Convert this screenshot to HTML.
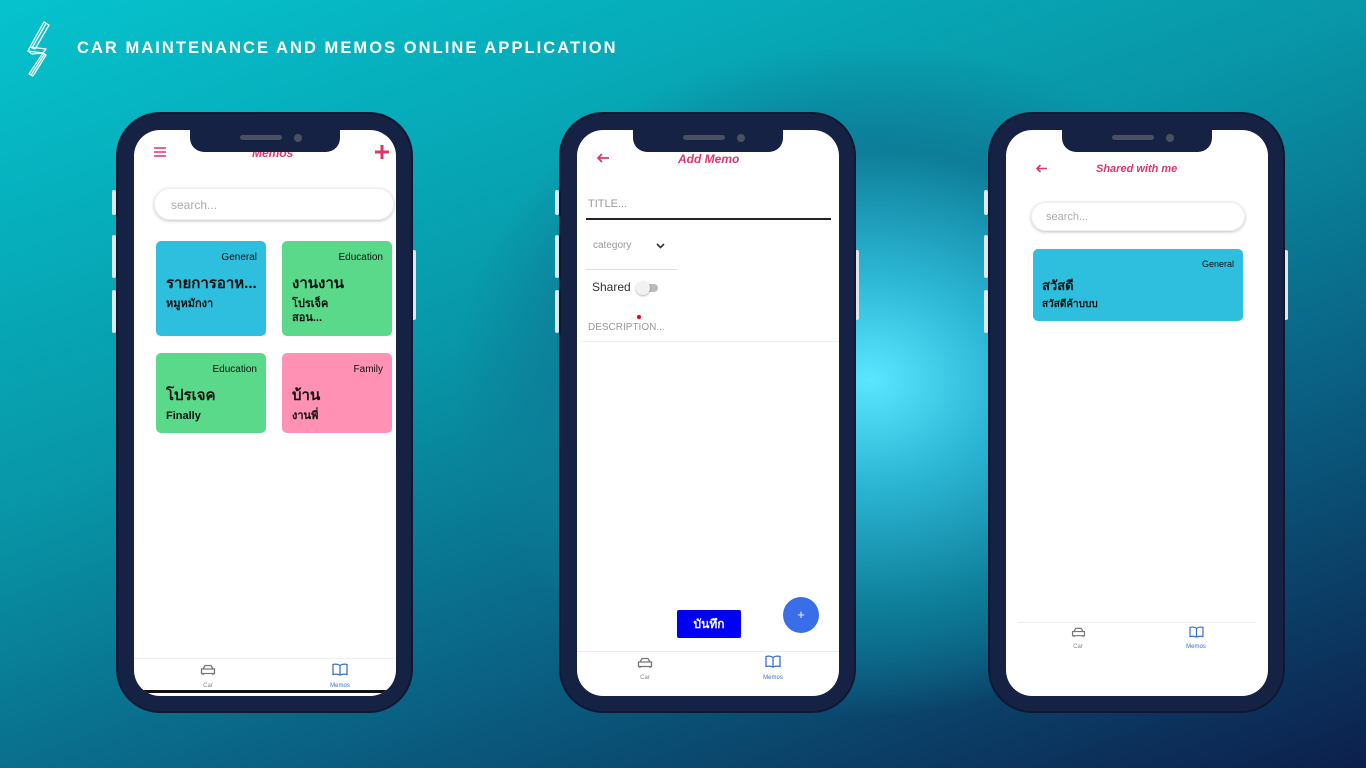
<!DOCTYPE html>
<html><head><meta charset="utf-8"><style>
*{margin:0;padding:0;box-sizing:border-box}
body{width:1366px;height:768px;overflow:hidden;position:relative;font-family:"Liberation Sans","Noto Sans CJK SC",sans-serif;
background:radial-gradient(ellipse 520px 420px at 870px 380px,#5ae6ff 0%,#2bb6d4 25%,#0d7d98 55%,rgba(13,100,130,0) 80%),linear-gradient(160deg,#05c3cd 0%,#0897a8 40%,#0a5d80 70%,#0c1f4c 100%);}
.title{position:absolute;left:77px;top:39px;color:#fff;font-weight:bold;font-size:16.5px;letter-spacing:2.05px}
.phone{position:absolute;top:112px;width:297px;height:601px;background:#162244;border-radius:44px;border:2px solid #0e1833}
.scr{position:absolute;left:16px;top:16px;width:262px;height:566px;background:#fff;border-radius:26px;overflow:hidden}
.notch{position:absolute;left:72px;top:16px;width:150px;height:22px;background:#162244;border-radius:0 0 14px 14px}
.notch:before{content:"";position:absolute;left:50px;top:5px;width:42px;height:5px;border-radius:3px;background:#4b5060}
.notch:after{content:"";position:absolute;left:104px;top:4px;width:8px;height:8px;border-radius:50%;background:#4b5060}
.btn{position:absolute;width:4px;background:#dfe6ea;border-radius:2px}
.pink{color:#e0356a;font-style:italic;font-weight:bold}
.search{position:absolute;border-radius:18px;box-shadow:0 1px 3px rgba(0,0,0,.25);border:1px solid #eee;color:#aaa;font-size:12px}
.card{position:absolute;border-radius:5px;color:#111}
.card .c{position:absolute;right:9px;top:11px;font-size:10px}
.card .t{position:absolute;left:10px;top:30px;font-size:15px;font-weight:bold}
.card .d{position:absolute;left:10px;top:56px;font-size:11px;font-weight:bold;line-height:14px}
.nav{position:absolute;left:0;width:262px;border-top:1px solid #eee;font-size:6px}
.nav span{position:absolute;text-align:center;width:60px}
.nav svg{position:absolute}
</style></head><body>
<svg style="position:absolute;left:26px;top:20px" width="34" height="58" viewBox="0 0 34 58" fill="none" stroke="#fff" stroke-width="1.3" stroke-linejoin="round"><path d="M18 2 L23 5 L9 29 L4 27 Z"/><path d="M20 3.5 L6 28"/><path d="M4 27 L2 31 L17 33 L20 29 Z"/><path d="M2 31 L6 34 L17 33"/><path d="M17 33 L20 35 L7 56 L3 54 Z"/><path d="M18.5 34 L5 55"/></svg>
<div class="title">CAR MAINTENANCE AND MEMOS ONLINE APPLICATION</div>

<!-- phone 1 -->
<div class="btn" style="left:112px;top:190px;height:25px"></div><div class="btn" style="left:112px;top:235px;height:43px"></div><div class="btn" style="left:112px;top:290px;height:43px"></div><div class="btn" style="left:412px;top:250px;height:70px"></div>
<div class="phone" style="left:116px"><div class="scr">
 <svg style="position:absolute;left:20px;top:17px" width="12" height="10"><path d="M0 1h12M0 5h12M0 9h12" stroke="#e0356a" stroke-width="1.6"/></svg>
 <div class="pink" style="position:absolute;left:118px;top:16px;font-size:12px">Memos</div>
 <svg style="position:absolute;left:241px;top:15px" width="14" height="14"><path d="M7 0v14M0 7h14" stroke="#e0356a" stroke-width="3"/></svg>
 <div class="search" style="left:20px;top:58px;width:240px;height:32px;padding:9px 16px">search...</div>
 <div class="card" style="left:22px;top:111px;width:110px;height:95px;background:#2ebfdf"><div class="c">General</div><div class="t">รายการอาห...</div><div class="d">หมูหมักงา</div></div>
 <div class="card" style="left:148px;top:111px;width:110px;height:95px;background:#5bd98a"><div class="c">Education</div><div class="t">งานงาน</div><div class="d">โปรเจ็ค<br>สอน...</div></div>
 <div class="card" style="left:22px;top:223px;width:110px;height:80px;background:#5bd98a"><div class="c">Education</div><div class="t">โปรเจค</div><div class="d">Finally</div></div>
 <div class="card" style="left:148px;top:223px;width:110px;height:80px;background:#ff91b4"><div class="c">Family</div><div class="t">บ้าน</div><div class="d">งานพี่</div></div>
 <div class="nav" style="top:528px;height:38px">
  <svg style="left:66px;top:5px" width="16" height="12" viewBox="0 0 16 12" fill="none" stroke="#777" stroke-width="1.3"><path d="M3 5 L5 1.5 H11 L13 5 M1.5 5 H14.5 V9.5 H1.5 Z M3 9.5 V11 M13 9.5 V11"/></svg>
  <span style="left:44px;top:24px;color:#888">Car</span>
  <svg style="left:198px;top:4px" width="16" height="13" viewBox="0 0 16 13" fill="none" stroke="#3b6fd0" stroke-width="1.3"><path d="M8 2.5 C6 1 3 1 1 1.5 V11.5 C3 11 6 11 8 12 C10 11 13 11 15 11.5 V1.5 C13 1 10 1 8 2.5 Z M8 2.5 V12"/></svg>
  <span style="left:176px;top:24px;color:#3b6fd0">Memos</span></div>
 <div style="position:absolute;left:0;top:560px;width:262px;height:3px;background:#111"></div>
</div><div class="notch"></div></div>

<!-- phone 2 -->
<div class="btn" style="left:555px;top:190px;height:25px"></div><div class="btn" style="left:555px;top:235px;height:43px"></div><div class="btn" style="left:555px;top:290px;height:43px"></div><div class="btn" style="left:855px;top:250px;height:70px"></div>
<div class="phone" style="left:559px"><div class="scr">
 <svg style="position:absolute;left:20px;top:23px" width="13" height="10"><path d="M12 5H1M5 1L1 5L5 9" stroke="#e0356a" stroke-width="1.8" fill="none"/></svg>
 <div class="pink" style="position:absolute;left:101px;top:22px;font-size:12px">Add Memo</div>
 <div style="position:absolute;left:11px;top:68px;color:#999;font-size:11px">TITLE...</div>
 <div style="position:absolute;left:9px;top:88px;width:245px;border-top:2px solid #222"></div>
 <div style="position:absolute;left:16px;top:110px;color:#999;font-size:10px">category</div>
 <svg style="position:absolute;left:79px;top:113px" width="9" height="6"><path d="M1 1L4.5 4.5L8 1" stroke="#333" stroke-width="1.6" fill="none"/></svg>
 <div style="position:absolute;left:9px;top:139px;width:91px;border-top:1px solid #ddd"></div>
 <div style="position:absolute;left:15px;top:150px;color:#333;font-size:12px">Shared</div>
 <div style="position:absolute;left:62px;top:154px;width:19px;height:8px;background:#bbb;border-radius:4px"></div>
 <div style="position:absolute;left:59px;top:151px;width:14px;height:14px;background:#f2f2f2;border-radius:50%;box-shadow:0 1px 2px rgba(0,0,0,.3)"></div>
 <div style="position:absolute;left:60px;top:185px;width:4px;height:4px;background:#e00;border-radius:50%"></div>
 <div style="position:absolute;left:11px;top:192px;color:#999;font-size:10px">DESCRIPTION...</div>
 <div style="position:absolute;left:4px;top:211px;width:258px;border-top:1px solid #f0f0f0"></div>
 <div style="position:absolute;left:100px;top:480px;width:64px;height:28px;background:#0000f5;border-radius:2px;color:#fff;font-size:12px;font-weight:bold;text-align:center;line-height:28px">บันทึก</div>
 <div style="position:absolute;left:206px;top:467px;width:36px;height:36px;background:#3a6ee8;border-radius:50%;color:#fff;text-align:center;line-height:36px;font-size:13px">+</div>
 <div class="nav" style="top:521px;height:45px">
  <svg style="left:60px;top:5px" width="16" height="12" viewBox="0 0 16 12" fill="none" stroke="#777" stroke-width="1.3"><path d="M3 5 L5 1.5 H11 L13 5 M1.5 5 H14.5 V9.5 H1.5 Z M3 9.5 V11 M13 9.5 V11"/></svg>
  <span style="left:38px;top:23px;color:#888">Car</span>
  <svg style="left:188px;top:3px" width="16" height="13" viewBox="0 0 16 13" fill="none" stroke="#3b6fd0" stroke-width="1.3"><path d="M8 2.5 C6 1 3 1 1 1.5 V11.5 C3 11 6 11 8 12 C10 11 13 11 15 11.5 V1.5 C13 1 10 1 8 2.5 Z M8 2.5 V12"/></svg>
  <span style="left:166px;top:23px;color:#3b6fd0">Memos</span></div>
</div><div class="notch"></div></div>

<!-- phone 3 -->
<div class="btn" style="left:984px;top:190px;height:25px"></div><div class="btn" style="left:984px;top:235px;height:43px"></div><div class="btn" style="left:984px;top:290px;height:43px"></div><div class="btn" style="left:1284px;top:250px;height:70px"></div>
<div class="phone" style="left:988px"><div class="scr">
 <svg style="position:absolute;left:30px;top:34px" width="12" height="9"><path d="M11 4.5H1M4.5 1L1 4.5L4.5 8" stroke="#e0356a" stroke-width="1.6" fill="none"/></svg>
 <div class="pink" style="position:absolute;left:90px;top:33px;font-size:11px">Shared with me</div>
 <div class="search" style="left:25px;top:72px;width:214px;height:29px;padding:8px 14px;font-size:11px">search...</div>
 <div class="card" style="left:27px;top:119px;width:210px;height:72px;background:#2ebfdf"><div class="c" style="top:10px;font-size:9px">General</div><div class="t" style="left:9px;top:26px;font-size:13px">สวัสดี</div><div class="d" style="left:9px;top:49px;font-size:10px">สวัสดีค้าบบบ</div></div>
 <div class="nav" style="left:12px;width:238px;top:492px;height:40px">
  <svg style="left:53px;top:4px" width="15" height="11" viewBox="0 0 16 12" fill="none" stroke="#777" stroke-width="1.3"><path d="M3 5 L5 1.5 H11 L13 5 M1.5 5 H14.5 V9.5 H1.5 Z M3 9.5 V11 M13 9.5 V11"/></svg>
  <span style="left:30px;top:21px;color:#888">Car</span>
  <svg style="left:171px;top:3px" width="15" height="12" viewBox="0 0 16 13" fill="none" stroke="#3b6fd0" stroke-width="1.3"><path d="M8 2.5 C6 1 3 1 1 1.5 V11.5 C3 11 6 11 8 12 C10 11 13 11 15 11.5 V1.5 C13 1 10 1 8 2.5 Z M8 2.5 V12"/></svg>
  <span style="left:148px;top:21px;color:#3b6fd0">Memos</span></div>
</div><div class="notch"></div></div>
</body></html>
